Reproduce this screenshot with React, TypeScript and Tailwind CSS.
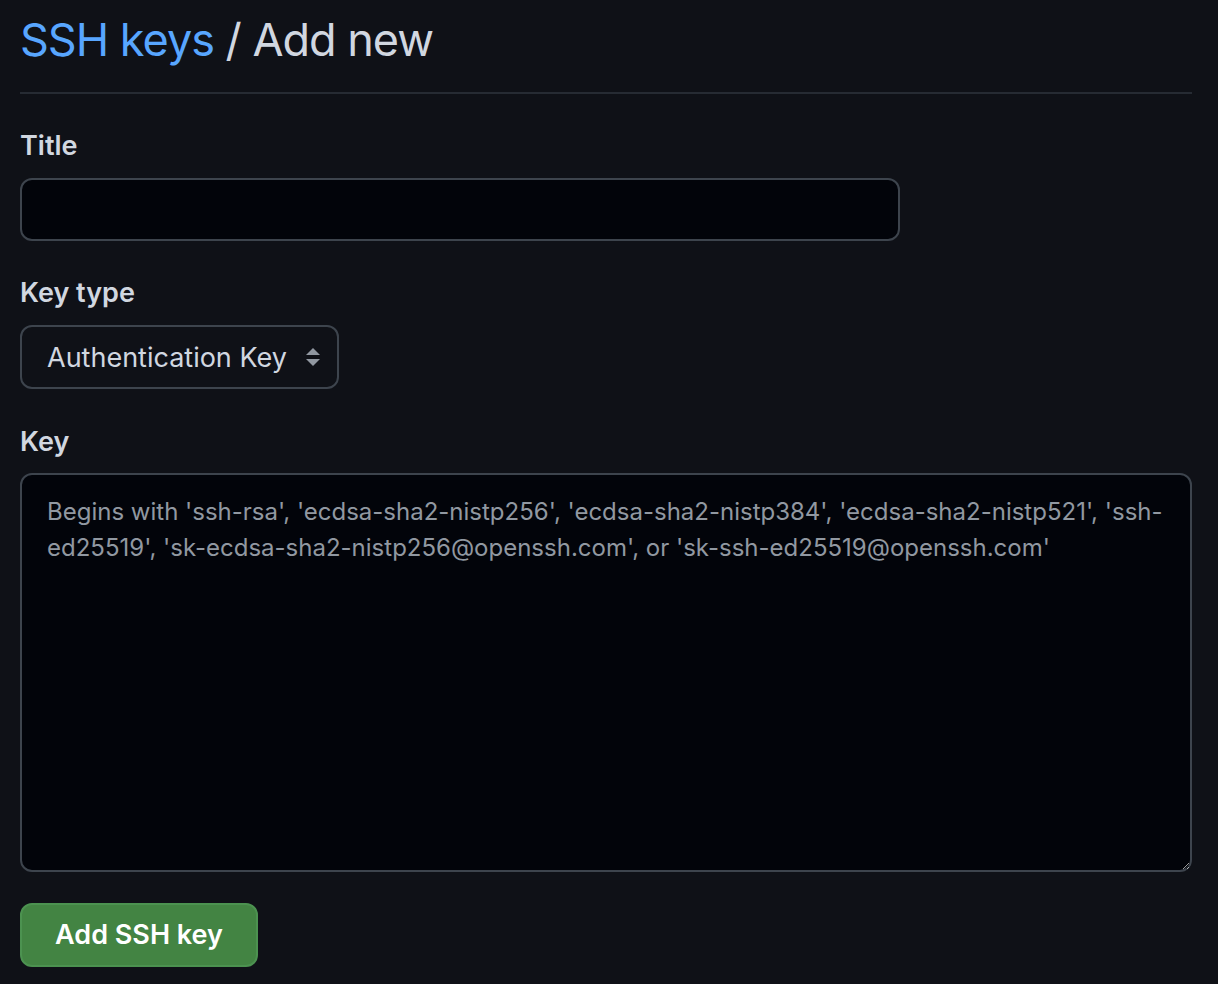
import { useState } from "react";

const PLACEHOLDER =
  "Begins with 'ssh-rsa', 'ecdsa-sha2-nistp256', 'ecdsa-sha2-nistp384', 'ecdsa-sha2-nistp521', 'ssh-\ned25519', 'sk-ecdsa-sha2-nistp256@openssh.com', or 'sk-ssh-ed25519@openssh.com'";

function SelectArrows() {
  return (
    <svg width="16" height="22" viewBox="0 0 16 22" className="pointer-events-none absolute right-[18px] top-1/2 -translate-y-1/2">
      <path d="M8 2 L15 9 H1 Z" fill="#9198a1" />
      <path d="M8 20 L15 13 H1 Z" fill="#9198a1" />
    </svg>
  );
}

// SSH key add form, GitHub dark theme
export default function App() {
  const [title, setTitle] = useState("");
  const [key, setKey] = useState("");
  const [kind, setKind] = useState("auth");

  return (
    <div className="min-h-[984px] w-full bg-[#0f1117] font-['Inter',sans-serif] text-[#d1d7e0]">
      <div className="w-[1172px] ml-[20px] pt-[10px]">
        <h1 className="border-b-2 border-[#262b33] pb-[22px] text-[45px] leading-[60px] tracking-[-1px]">
          <a className="text-[#58a6ff]">SSH keys</a> / Add new
        </h1>

        <form className="mt-[32px] flex flex-col" onSubmit={(e) => e.preventDefault()}>
          <label className="text-[27px] font-semibold leading-[40px]">Title</label>
          <input
            value={title}
            onChange={(e) => setTitle(e.target.value)}
            className="mt-[12px] h-[63px] w-[880px] rounded-[12px] border-2 border-[#3d444d] bg-[#02040a] px-[24px] text-[28px] outline-none"
          />

          <label className="mt-[32px] text-[27px] font-semibold leading-[40px]">Key type</label>
          <div className="relative mt-[12px] w-[319px]">
            <select
              value={kind}
              onChange={(e) => setKind(e.target.value)}
              className="h-[64px] w-full appearance-none rounded-[12px] border-2 border-[#3d444d] bg-[#0f1117] pl-[25px] pt-[2px] text-[27px] text-[#d1d7e0] outline-none"
            >
              <option value="auth">Authentication Key</option>
              <option value="sign">Signing Key</option>
            </select>
            <SelectArrows />
          </div>

          <label className="mt-[33px] text-[27px] font-semibold leading-[40px]">Key</label>
          <textarea
            value={key}
            onChange={(e) => setKey(e.target.value)}
            placeholder={PLACEHOLDER}
            className="mt-[11px] h-[399px] w-full rounded-[12px] border-2 border-[#3d444d] bg-[#02040a] px-[25px] py-[19px] text-[24px] leading-[36px] outline-none placeholder:text-[#9198a1]"
          />

          <div className="mt-[31px]">
            <button
              type="submit"
              className="h-[64px] w-[238px] rounded-[12px] border-2 border-[#4c9250] bg-[#438443] text-[27px] font-semibold text-white"
            >
              Add SSH key
            </button>
          </div>
        </form>
      </div>
    </div>
  );
}
